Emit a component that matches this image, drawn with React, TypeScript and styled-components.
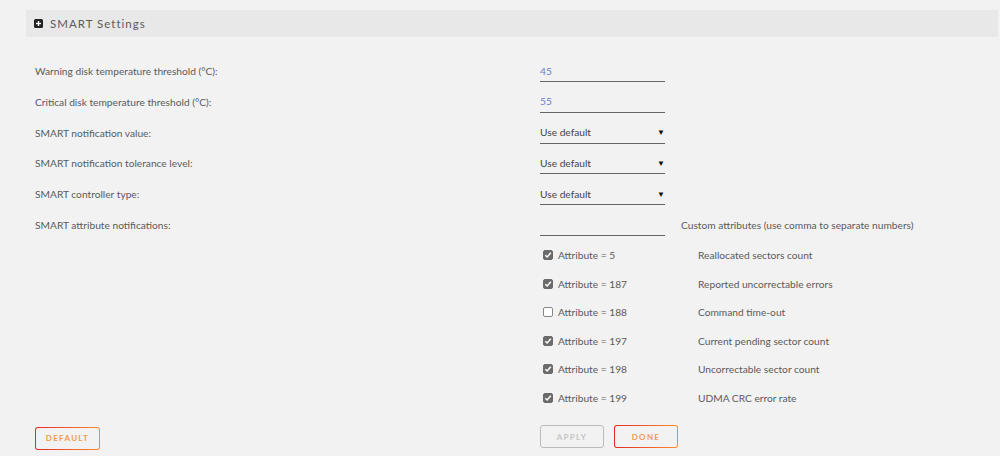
import React, { useState } from "react";
import styled, { createGlobalStyle } from "styled-components";

const GlobalStyle = createGlobalStyle`
  body {
    margin: 0;
    background: #f2f2f2;
    font-family: Lato, "Open Sans", sans-serif;
    color: #555;
  }
`;

const attributes = [
  { id: 5, text: "Reallocated sectors count", checked: true },
  { id: 187, text: "Reported uncorrectable errors", checked: true },
  { id: 188, text: "Command time-out", checked: false },
  { id: 197, text: "Current pending sector count", checked: true },
  { id: 198, text: "Uncorrectable sector count", checked: true },
  { id: 199, text: "UDMA CRC error rate", checked: true },
];

function PlusIcon() {
  return (
    <svg width="9" height="9" viewBox="0 0 9 9">
      <rect x="0" y="0" width="9" height="9" rx="1.5" fill="#222" />
      <rect x="2" y="3.8" width="5" height="1.4" fill="#fff" />
      <rect x="3.8" y="2" width="1.4" height="5" fill="#fff" />
    </svg>
  );
}

function CheckBox({ checked, onClick }: { checked: boolean; onClick: () => void }) {
  return (
    <Box checked={checked} onClick={onClick}>
      {checked && (
        <svg width="8" height="8" viewBox="0 0 8 8">
          <path d="M1.3 4.2 L3.2 6 L6.8 1.8" stroke="#fff" strokeWidth="1.5" fill="none" />
        </svg>
      )}
    </Box>
  );
}

function App() {
  const [checks, setChecks] = useState(attributes.map((a) => a.checked));

  const toggle = (i: number) => {
    const next = [...checks];
    next[i] = !next[i];
    setChecks(next);
  };

  return (
    <Page>
      <GlobalStyle />
      <Header>
        <PlusIcon />
        <Title>SMART Settings</Title>
      </Header>

      <Form>
        <Row>
          <Label>Warning disk temperature threshold (°C):</Label>
          <Field><Value>45</Value></Field>
        </Row>
        <Row>
          <Label>Critical disk temperature threshold (°C):</Label>
          <Field><Value>55</Value></Field>
        </Row>
        <Row>
          <Label>SMART notification value:</Label>
          <Field><SelectText>Use default</SelectText><Arrow>▼</Arrow></Field>
        </Row>
        <Row>
          <Label>SMART notification tolerance level:</Label>
          <Field><SelectText>Use default</SelectText><Arrow>▼</Arrow></Field>
        </Row>
        <Row>
          <Label>SMART controller type:</Label>
          <Field><SelectText>Use default</SelectText><Arrow>▼</Arrow></Field>
        </Row>
        <Row h={27}>
          <Label>SMART attribute notifications:</Label>
          <Inline>
            <Field />
            <Hint>Custom attributes (use comma to separate numbers)</Hint>
          </Inline>
        </Row>

        {attributes.map((a, i) => (
          <AttrRow key={a.id}>
            <span />
            <AttrGrid>
              <AttrLabel>
                <CheckBox checked={checks[i]} onClick={() => toggle(i)} />
                Attribute = {a.id}
              </AttrLabel>
              <AttrText>{a.text}</AttrText>
            </AttrGrid>
          </AttrRow>
        ))}

        <ButtonRow>
          <div>
            <Button wide>Default</Button>
          </div>
          <Buttons>
            <Button disabled>Apply</Button>
            <Button>Done</Button>
          </Buttons>
        </ButtonRow>
      </Form>
    </Page>
  );
}

export default App;

const Page = styled.div`
  padding: 10px 2px 0 26px;
`;

const Header = styled.div`
  display: flex;
  align-items: center;
  height: 27px;
  background: #e8e8e8;
  padding-left: 8px;
  gap: 7px;
`;

const Title = styled.span`
  font-size: 11.5px;
  letter-spacing: 1px;
  color: #5a5a5a;
`;

const Form = styled.div`
  padding: 23px 0 0 9px;
`;

const Row = styled.div<{ h?: number }>`
  display: grid;
  grid-template-columns: 505px 1fr;
  height: ${(p) => p.h ?? 30.75}px;
`;

const Label = styled.div`
  font-size: 10.2px;
  line-height: 22px;
  color: #5a5a5a;
`;

const Field = styled.div`
  width: 125px;
  height: 22px;
  box-sizing: border-box;
  border-bottom: 1px solid #666;
  display: flex;
  align-items: center;
  justify-content: space-between;
  font-size: 10.2px;
`;

const Value = styled.span`
  color: #6a80c4;
`;

const SelectText = styled.span`
  color: #444;
`;

const Arrow = styled.span`
  font-size: 8px;
  color: #111;
`;

const Inline = styled.div`
  display: flex;
  align-items: flex-start;
  gap: 16px;
`;

const Hint = styled.span`
  font-size: 10.2px;
  line-height: 22px;
  color: #5a5a5a;
`;

const AttrRow = styled.div`
  display: grid;
  grid-template-columns: 505px 1fr;
  height: 28.6px;
  align-items: center;
`;

const AttrGrid = styled.div`
  display: grid;
  grid-template-columns: 158px 1fr;
  align-items: center;
  font-size: 10.2px;
`;

const AttrLabel = styled.label`
  display: flex;
  align-items: center;
  gap: 5px;
  padding-left: 3px;
  color: #5a5a5a;
`;

const AttrText = styled.span`
  color: #5a5a5a;
`;

const Box = styled.span<{ checked: boolean }>`
  width: 10px;
  height: 10px;
  box-sizing: border-box;
  border-radius: 2px;
  display: inline-flex;
  align-items: center;
  justify-content: center;
  background: ${(p) => (p.checked ? "#6b6b6b" : "#fff")};
  border: 1px solid ${(p) => (p.checked ? "#6b6b6b" : "#888")};
  cursor: pointer;
`;

const ButtonRow = styled.div`
  display: grid;
  grid-template-columns: 505px 1fr;
  margin-top: 13px;
`;

const Buttons = styled.div`
  display: flex;
  gap: 10px;
`;

const Button = styled.button<{ wide?: boolean }>`
  width: ${(p) => (p.wide ? 65 : 64)}px;
  height: 23px;
  box-sizing: border-box;
  border: 1px solid transparent;
  border-radius: 3px;
  background: linear-gradient(#f2f2f2, #f2f2f2) padding-box,
    linear-gradient(90deg, #e22828, #ff8c2f) border-box;
  font-family: Lato, sans-serif;
  font-weight: 700;
  font-size: 8px;
  letter-spacing: 1.3px;
  text-transform: uppercase;
  color: #f29a52;
  padding: 0;
  cursor: pointer;

  &:disabled {
    background: #f2f2f2;
    border-color: #bbb;
    color: #c4c4c4;
    cursor: default;
  }
`;
